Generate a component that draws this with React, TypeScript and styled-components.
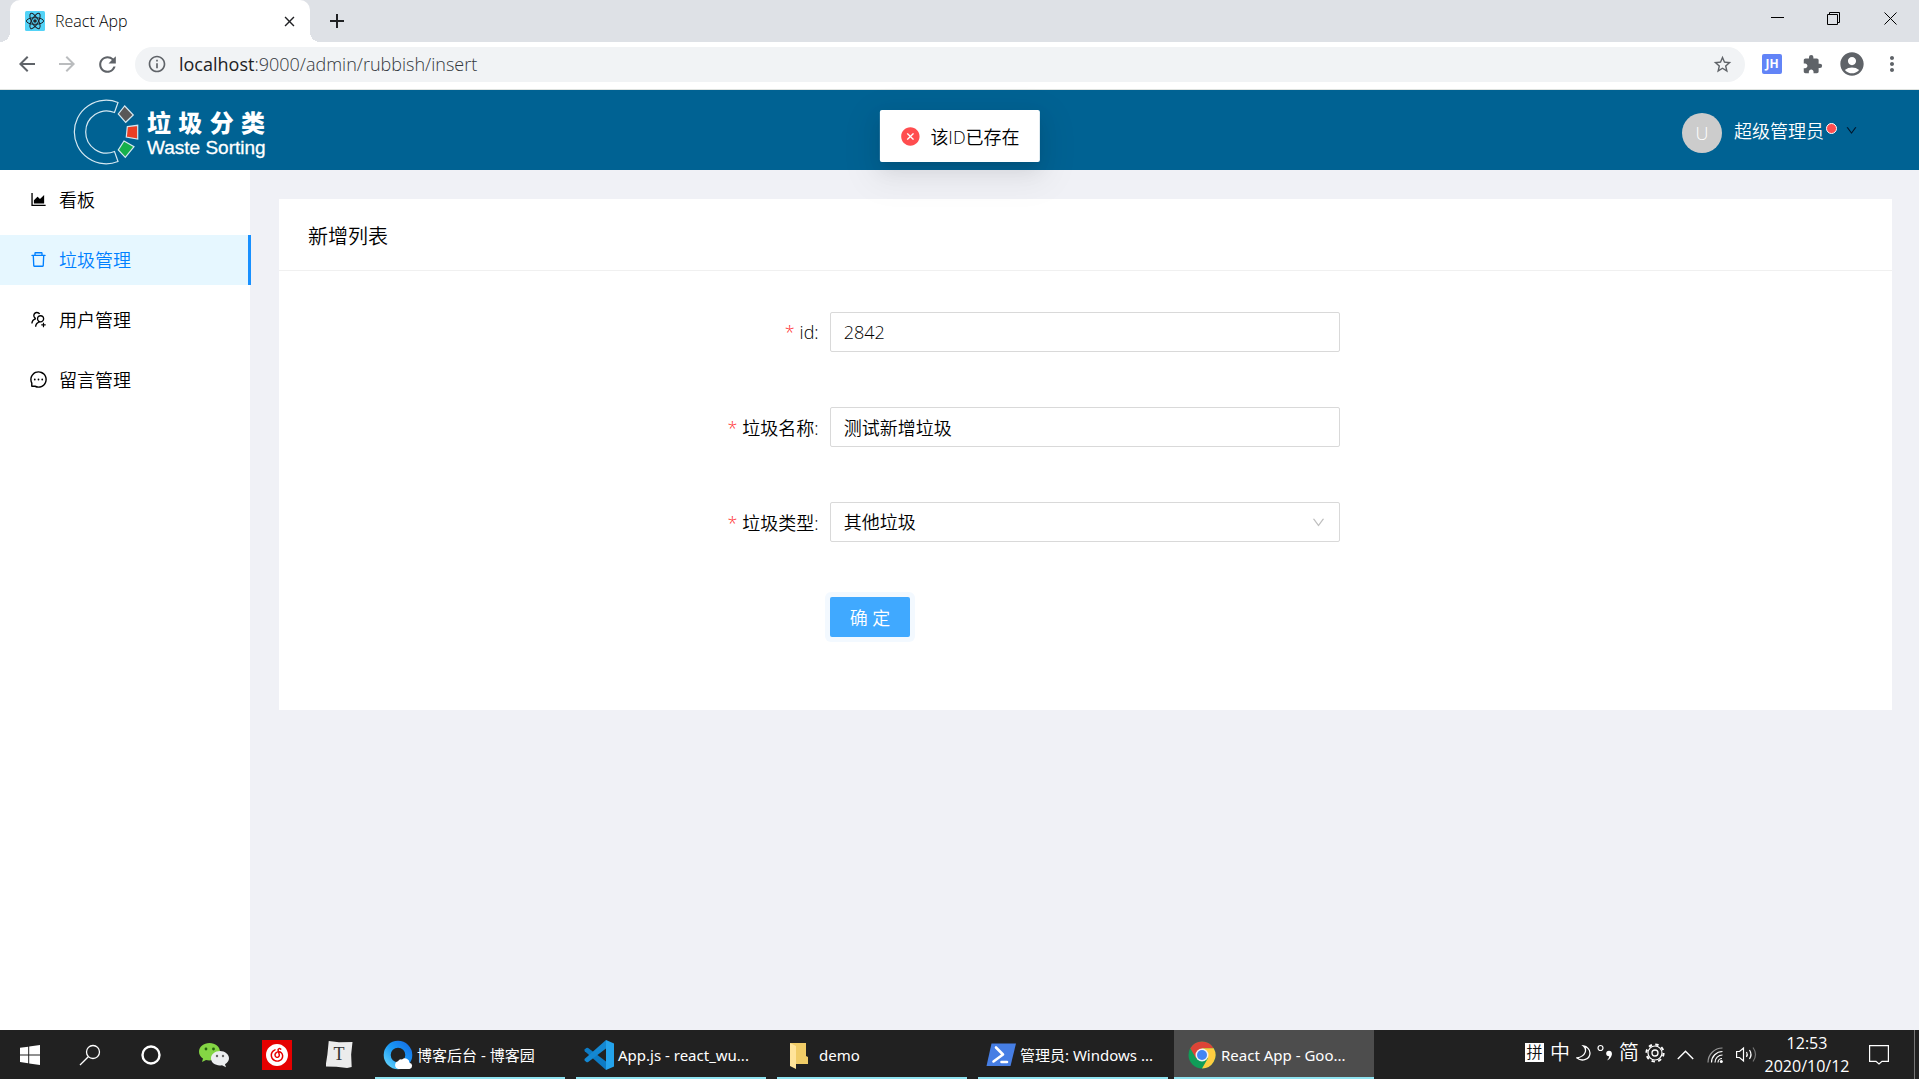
import React from 'react';
import styled, { createGlobalStyle, css } from 'styled-components';
import {
  AiOutlineAreaChart,
  AiOutlineDelete,
  AiOutlineUsergroupAdd,
  AiOutlineMessage,
  AiFillCloseCircle,
  AiOutlineDown,
} from 'react-icons/ai';
import {
  MdExtension,
  MdAccountCircle,
  MdMoreVert,
  MdStarBorder,
  MdInfoOutline,
  MdArrowBack,
  MdArrowForward,
  MdRefresh,
  MdClose,
  MdAdd,
} from 'react-icons/md';
import { SiNeteasecloudmusic } from 'react-icons/si';

const thin = '"Open Sans", "Noto Sans CJK SC", sans-serif';
const ui = '"Noto Sans", "Noto Sans CJK SC", sans-serif';

const GlobalStyle = createGlobalStyle`
  *, *::before, *::after { box-sizing: border-box; }
  body { margin: 0; font-family: ${ui}; background: #f0f1f6; }
  button { font: inherit; color: inherit; background: none; border: 0; padding: 0; cursor: pointer; }
  svg { display: block; flex: none; }
`;

const Desktop = styled.div`
  min-height: 100vh;
  display: flex;
  flex-direction: column;
`;

/* Browser window */
const TabStrip = styled.div`
  height: 42px;
  display: flex;
  background: #dee1e6;
  padding-left: 10px;
`;

const Tab = styled.div`
  position: relative;
  width: 300px;
  display: flex;
  align-items: center;
  padding: 0 12px 0 15px;
  gap: 10px;
  background: #fff;
  border-radius: 10px 10px 0 0;
  font-family: ${thin};
  font-size: 16px;
  font-weight: 300;
  color: #000;

  &::before,
  &::after {
    content: '';
    position: absolute;
    bottom: 0;
    width: 10px;
    height: 10px;
  }
  &::before {
    left: -10px;
    background: radial-gradient(circle at 0 0, transparent 10px, #fff 10px);
  }
  &::after {
    right: -10px;
    background: radial-gradient(circle at 100% 0, transparent 10px, #fff 10px);
  }
`;

const TabTitle = styled.span`
  flex: 1;
`;

const IconButton = styled.button<{ $w?: number; $color?: string }>`
  width: ${(p) => p.$w ?? 40}px;
  display: flex;
  align-items: center;
  justify-content: center;
  color: ${(p) => p.$color ?? '#5f6368'};
`;

const WindowControls = styled.div`
  margin-left: auto;
  height: 36px;
  display: flex;
`;

const Toolbar = styled.div`
  height: 48px;
  display: flex;
  align-items: center;
  padding: 0 7px 3px 7px;
  background: #fff;
  border-bottom: 1px solid #dfe3e0;
`;

const AddressBar = styled.form`
  flex: 1;
  height: 35px;
  margin: 0 7px 0 8px;
  display: flex;
  align-items: center;
  gap: 12px;
  padding: 0 12px;
  border-radius: 18px;
  background: #f1f3f5;
  color: #5f6368;
`;

const Url = styled.span`
  flex: 1;
  font-family: ${thin};
  font-size: 18px;
  font-weight: 300;
  color: #33373c;

  b {
    font-weight: 400;
    color: #202124;
  }
`;

/* Application */
const Page = styled.div`
  flex: 1;
  display: flex;
  flex-direction: column;
  font-family: ${thin};
  font-size: 18px;
  font-weight: 350;
  color: #000;
`;

const Header = styled.header`
  position: relative;
  height: 80px;
  display: flex;
  align-items: center;
  justify-content: space-between;
  padding: 0 61px 0 73px;
  background: #006293;
`;

const Brand = styled.a`
  display: flex;
  align-items: center;
  gap: 8px;
  padding-top: 4px;
  color: #fff;
  text-decoration: none;
`;

const BrandText = styled.span`
  display: flex;
  flex-direction: column;
  padding-top: 4px;
`;

const BrandName = styled.span`
  display: flex;
  justify-content: space-between;
  width: 118px;
  font-size: 24px;
  line-height: 28px;
  font-weight: 900;
`;

const BrandSub = styled.span`
  font-family: "Liberation Sans", Arial, sans-serif;
  font-size: 19px;
  line-height: 22px;
  font-weight: 400;
  -webkit-text-stroke: 0.3px #fff;
`;

const UserMenu = styled.button`
  display: flex;
  align-items: center;
  color: #fff;
`;

const Avatar = styled.span`
  width: 40px;
  height: 40px;
  margin: 6px 12px 0 0;
  border-radius: 50%;
  background: #ccc;
  font-size: 18px;
  line-height: 40px;
  text-align: center;
`;

const Dot = styled.i`
  width: 11px;
  height: 11px;
  margin: 0 8px 4px 2px;
  border: 1px solid #fff;
  border-radius: 50%;
  background: #ff4d4f;
`;

const Toast = styled.div`
  position: absolute;
  top: 20px;
  left: 50%;
  transform: translateX(-50%);
  z-index: 2;
  height: 52px;
  display: flex;
  align-items: center;
  gap: 10px;
  padding: 0 20px;
  border-radius: 2px;
  background: #fff;
  white-space: nowrap;
  box-shadow: 0 4px 8px -5px rgba(0, 0, 0, 0.12), 0 8px 20px rgba(0, 0, 0, 0.08),
    0 11px 35px 10px rgba(0, 0, 0, 0.05);

  svg {
    color: #ff4d4f;
  }
`;

const Body = styled.div`
  flex: 1;
  display: flex;
`;

const Sidebar = styled.nav`
  width: 250px;
  padding-top: 5px;
  background: #fff;
  display: flex;
  flex-direction: column;
  gap: 10px;
`;

const MenuItem = styled.a<{ $active?: boolean }>`
  height: 50px;
  display: flex;
  align-items: center;
  gap: 11px;
  padding: 0 0 2px 29px;
  color: inherit;
  text-decoration: none;
  ${(p) =>
    p.$active &&
    css`
      margin-right: -1px;
      color: #0080ff;
      background: #e6f7ff;
      border-right: 3px solid #1890ff;
    `}
`;

const Main = styled.main`
  flex: 1;
  padding: 29px 27px 29px 29px;
`;

const Card = styled.section`
  background: #fff;
`;

const CardTitle = styled.h1`
  margin: 0;
  height: 72px;
  padding: 0 29px;
  border-bottom: 1px solid #f0f0f0;
  font-size: 20px;
  line-height: 75px;
  font-weight: 350;
`;

const Form = styled.form`
  display: flex;
  flex-direction: column;
  gap: 55px;
  padding: 41px 41px 73px 40px;
`;

const FormRow = styled.div`
  display: grid;
  grid-template-columns: repeat(3, 1fr);
  align-items: center;
  min-height: 40px;
`;

const Label = styled.label`
  padding-right: 11px;
  text-align: right;

  &::before {
    content: '*';
    margin-right: 5px;
    color: #ff3033;
  }
`;

const control = css`
  width: 100%;
  height: 40px;
  padding: 0 13px;
  border: 1px solid #d9d9d9;
  border-radius: 2px;
  background: #fff;
  font: inherit;
  color: inherit;
  outline: none;
`;

const Input = styled.input`
  ${control}
`;

const SelectBox = styled.div`
  position: relative;
  color: inherit;

  svg {
    position: absolute;
    right: 14px;
    top: 13px;
    color: #bfbfbf;
    pointer-events: none;
  }
`;

const Select = styled.select`
  ${control}
  appearance: none;
`;

const Submit = styled.button`
  grid-column: 2;
  justify-self: start;
  height: 40px;
  padding: 0 20px;
  border-radius: 2px;
  background: #40a9ff;
  color: #fff;
  box-shadow: 0 0 0 5px #f3f9ff, 0 2px 0 rgba(0, 0, 0, 0.05);
`;

/* Taskbar */
const Taskbar = styled.footer`
  height: 49px;
  display: flex;
  align-items: stretch;
  background: #212121;
  color: #fff;
  font-size: 15px;
`;

const Pinned = styled.div`
  display: flex;
`;

const Tasks = styled.div`
  display: flex;
  gap: 1px;
`;

const Task = styled.button<{ $active?: boolean }>`
  width: 200px;
  display: flex;
  align-items: center;
  gap: 4px;
  padding: 0 13px;
  white-space: nowrap;
  text-align: left;
  background: linear-gradient(#8fe3f0, #8fe3f0) bottom center no-repeat;
  background-size: ${(p) => (p.$active ? '100% 2px' : '190px 2px')};
  background-color: ${(p) => (p.$active ? '#4d4d4d' : 'transparent')};
`;

const Tray = styled.div`
  margin-left: auto;
  display: flex;
  align-items: center;
`;

const Ime = styled.div`
  display: flex;
  align-items: center;
  gap: 6px;
  padding: 0 12px 4px 0;
  font-size: 20px;
  line-height: 20px;
  font-weight: 350;
`;

const ImeMode = styled.span`
  width: 19px;
  height: 19px;
  background: #fff;
  color: #111;
  font-size: 16px;
  line-height: 18px;
  text-align: center;
`;

const Clock = styled.div`
  width: 86px;
  margin: 0 19px 0 7px;
  font-family: ${thin};
  font-size: 16px;
  text-align: center;
  line-height: 23px;
`;

const ShowDesktop = styled.button`
  align-self: stretch;
  width: 5px;
  margin-left: 25px;
  border-left: 1px solid #777;
`;

const ReactLogo = () => (
  <svg width="20" height="20" viewBox="0 0 20 20" fill="none" stroke="#20232a" strokeWidth="1">
    <rect width="20" height="20" rx="1.5" fill="#53d3f7" stroke="none" />
    <circle cx="10" cy="10" r="1.8" fill="#20232a" stroke="none" />
    <ellipse cx="10" cy="10" rx="8.6" ry="3.3" />
    <ellipse cx="10" cy="10" rx="8.6" ry="3.3" transform="rotate(60 10 10)" />
    <ellipse cx="10" cy="10" rx="8.6" ry="3.3" transform="rotate(120 10 10)" />
  </svg>
);

const BrandLogo = () => (
  <svg width="66" height="66" viewBox="0 0 66 66" fill="none" stroke="#d5e8f1" strokeWidth="1.2">
    <path d="M45 3.500A31.800 31.800 0 1 0 45 62.500L41.500 52.500A21 21 0 1 1 41.500 13.500Z" />
    <path d="M51.700 7L60.300 16L52.700 23.300L45.300 15Z" fill="#595757" />
    <path d="M54.300 27.700L64.700 26.300V40L53.300 38Z" fill="#ea3e24" />
    <path d="M51 42L61 47.700L52.300 58.300L45.300 51Z" fill="#16b04b" />
  </svg>
);

const WindowsLogo = () => (
  <svg width="20" height="20" viewBox="0 0 20 20" fill="#fff">
    <path d="M0 2.800L8.200 1.700V9.400H0zM9.200 1.500L20 0V9.400H9.200zM0 10.400H8.200V18.200L0 17.100zM9.200 10.400H20V20L9.200 18.400z" />
  </svg>
);

const SearchIcon = () => (
  <svg width="22" height="22" viewBox="0 0 22 22" fill="none" stroke="#fff" strokeWidth="1.300">
    <circle cx="14" cy="8" r="6.500" />
    <path d="M9.300 12.700L1 21" />
  </svg>
);

const CortanaIcon = () => (
  <svg width="20" height="20" viewBox="0 0 20 20" fill="none">
    <circle cx="10" cy="10" r="8.500" stroke="#fff" strokeWidth="2.400" />
  </svg>
);

const WechatIcon = () => (
  <svg width="30" height="26" viewBox="0 0 30 26">
    <path d="M10.500 1C4.700 1 0 4.800 0 9.700c0 2.800 1.500 5.200 4 6.800L3 20l4-2c6 1.500 14-1.500 14-8.300C21 4.800 16.300 1 10.500 1Z" fill="#84d644" />
    <circle cx="7" cy="7" r="1.400" fill="#26610f" />
    <circle cx="14.500" cy="7" r="1.400" fill="#26610f" />
    <path d="M21 9c-5 0-9 3.300-9 7.300 0 5 5.500 8 11 6.900l4 2-1-3c2.500-1.400 4-3.500 4-5.900C30 12.300 26 9 21 9Z" fill="#eceef0" />
    <circle cx="18" cy="14" r="1.200" fill="#666" />
    <circle cx="24" cy="14" r="1.200" fill="#666" />
  </svg>
);

const NeteaseTile = styled.span`
  width: 30px;
  height: 30px;
  display: grid;
  place-items: center;
  background: #e60000;
`;

const TyporaTile = styled.span`
  width: 27px;
  height: 27px;
  background: #ececec;
  clip-path: polygon(12% 0, 50% 5%, 100% 4%, 95% 50%, 97% 96%, 80% 100%, 40% 95%, 0 94%, 7% 50%);
  color: #333;
  font: 18px/27px "Liberation Serif", serif;
`;

const QQBrowserIcon = () => (
  <svg width="30" height="30" viewBox="0 0 30 30">
    <defs>
      <linearGradient id="qb" x1="0" y1="1" x2="1" y2="0">
        <stop offset="0" stopColor="#5fd0fb" />
        <stop offset=".5" stopColor="#1a9af5" />
        <stop offset="1" stopColor="#1572e8" />
      </linearGradient>
    </defs>
    <circle cx="15" cy="15" r="10.800" fill="none" stroke="url(#qb)" strokeWidth="7" />
    <path d="M15.500 29a4 4 0 0 1-.5-7.800 3.500 3.500 0 0 1 4-1.700 4.500 4.500 0 0 1 7.500 3.200A3.200 3.200 0 0 1 26.500 29Z" fill="#fff" />
  </svg>
);

const VsCodeIcon = () => (
  <svg width="30" height="30" viewBox="0 0 30 30">
    <path d="M22 0L30 3.500V26.500L22 30Z" fill="#24a3ec" />
    <path d="M22 30L0.800 11.200Q0 10.200 .8 9.300L2.300 8Q3.200 7.300 4.200 8L22 21.500Z" fill="#0d7bc4" />
    <path d="M22 0L.8 18.800Q0 19.800 .8 20.700L2.300 22Q3.200 22.700 4.200 22L22 8.500Z" fill="#1488d2" />
  </svg>
);

const FolderIcon = () => (
  <svg width="30" height="30" viewBox="0 0 30 30">
    <path d="M5 3H21V16L23 17V24H9Z" fill="#f0cc67" />
    <path d="M5 3L11 6V29L5 26Z" fill="#ffe49a" />
  </svg>
);

const PowerShellIcon = () => (
  <svg width="30" height="30" viewBox="0 0 30 30">
    <path d="M5.500 3.500H30L24.500 26H0.500Z" fill="#467ee4" />
    <path d="M10 7.500L17 14.500L7.500 21.500M15.500 22H21" fill="none" stroke="#fff" strokeWidth="2.600" strokeLinecap="round" strokeLinejoin="round" />
  </svg>
);

const ChromeIcon = () => (
  <svg width="30" height="30" viewBox="0 0 30 30">
    <circle cx="15" cy="15" r="13.500" fill="#109d58" />
    <path d="M15 15L3.300 8.250A13.500 13.500 0 0 1 26.700 8.250H15Z" fill="#dc4437" />
    <path d="M3.300 8.250L9.200 18.400L15 8.250Z" fill="#dc4437" />
    <path d="M26.700 8.250A13.500 13.500 0 0 1 15 28.500L20.800 18.400L15 8.250Z" fill="#ffcd40" />
    <circle cx="15" cy="15" r="6.500" fill="#f1f1f1" />
    <circle cx="15" cy="15" r="5" fill="#4285f4" />
  </svg>
);

const ExtensionBadge = styled.span`
  width: 20px;
  height: 20px;
  border-radius: 2px;
  background: #6284f7;
  color: #fff;
  font-size: 12px;
  line-height: 20px;
  font-weight: 700;
  text-align: center;
`;

const MoonIcon = () => (
  <svg width="15" height="16" viewBox="0 0 15 16" fill="none" stroke="#fff" strokeWidth="1.300">
    <path d="M7.500 1C11 4 10.500 11 1 13c5 4 13 1.500 13-5 0-3.500-3-6.500-6.500-7Z" />
  </svg>
);

const PunctuationIcon = () => (
  <svg width="16" height="18" viewBox="0 0 16 18">
    <circle cx="3.500" cy="4" r="2.500" fill="none" stroke="#fff" strokeWidth="1.200" />
    <circle cx="12" cy="9.500" r="2.800" fill="#fff" />
    <path d="M14.700 9.500Q15 14 10 16.500Q13 13 12 10Z" fill="#fff" />
  </svg>
);

const GearIcon = () => (
  <svg width="20" height="20" viewBox="0 0 20 20" fill="none" stroke="#fff">
    <circle cx="10" cy="10" r="7" strokeWidth="1.200" />
    <circle cx="10" cy="10" r="8.600" strokeWidth="2" strokeDasharray="3.400 3.354" />
    <circle cx="10" cy="10" r="3" strokeWidth="1.300" />
  </svg>
);

const TrayIcons = styled.div`
  display: flex;
  align-items: center;
  gap: 13px;
`;

const menu = [
  { label: '看板', icon: AiOutlineAreaChart },
  { label: '垃圾管理', icon: AiOutlineDelete, active: true },
  { label: '用户管理', icon: AiOutlineUsergroupAdd },
  { label: '留言管理', icon: AiOutlineMessage },
];

const tasks = [
  { label: '博客后台 - 博客园', icon: QQBrowserIcon },
  { label: 'App.js - react_wu...', icon: VsCodeIcon },
  { label: 'demo', icon: FolderIcon },
  { label: '管理员: Windows ...', icon: PowerShellIcon },
  { label: 'React App - Goo...', icon: ChromeIcon, active: true },
];

function BrowserChrome() {
  return (
    <>
      <TabStrip>
        <Tab>
          <ReactLogo />
          <TabTitle>React App</TabTitle>
          <IconButton $w={17} $color="#202124" aria-label="Close tab">
            <MdClose size={17} />
          </IconButton>
        </Tab>
        <IconButton $w={54} $color="#202124" aria-label="New tab">
          <MdAdd size={24} />
        </IconButton>
        <WindowControls>
          <IconButton $w={56} aria-label="Minimize">
            <svg width="13" height="13" stroke="#000"><path d="M0 5.500H13" /></svg>
          </IconButton>
          <IconButton $w={56} aria-label="Restore">
            <svg width="13" height="13" fill="none" stroke="#000">
              <path d="M.5 2.500H10.500V12.500H.5zM2.500 2.500V.5H12.500V10.500H10.500" />
            </svg>
          </IconButton>
          <IconButton $w={58} aria-label="Close">
            <svg width="13" height="13" stroke="#000"><path d="M.5 .5L12.500 12.500M12.500 .5L.5 12.500" /></svg>
          </IconButton>
        </WindowControls>
      </TabStrip>
      <Toolbar>
        <IconButton aria-label="Back"><MdArrowBack size={24} /></IconButton>
        <IconButton $color="#babcbe" aria-label="Forward"><MdArrowForward size={24} /></IconButton>
        <IconButton aria-label="Reload"><MdRefresh size={25} /></IconButton>
        <AddressBar>
          <MdInfoOutline size={20} />
          <Url><b>localhost</b>:9000/admin/rubbish/insert</Url>
          <MdStarBorder size={21} />
        </AddressBar>
        <IconButton aria-label="JH"><ExtensionBadge>JH</ExtensionBadge></IconButton>
        <IconButton aria-label="Extensions"><MdExtension size={21} /></IconButton>
        <IconButton aria-label="Profile"><MdAccountCircle size={28} /></IconButton>
        <IconButton aria-label="Menu"><MdMoreVert size={24} /></IconButton>
      </Toolbar>
    </>
  );
}

export default function App() {
  return (
    <Desktop>
      <GlobalStyle />
      <BrowserChrome />
      <Page>
        <Header>
          <Brand href="#">
            <BrandLogo />
            <BrandText>
              <BrandName>{[...'垃圾分类'].map((c) => <span key={c}>{c}</span>)}</BrandName>
              <BrandSub>Waste Sorting</BrandSub>
            </BrandText>
          </Brand>
          <UserMenu>
            <Avatar>U</Avatar>
            超级管理员
            <Dot />
            <AiOutlineDown size={13} color="#001529" />
          </UserMenu>
          <Toast role="alert">
            <AiFillCloseCircle size={21} />
            该ID已存在
          </Toast>
        </Header>
        <Body>
          <Sidebar>
            {menu.map(({ label, icon: Icon, active }) => (
              <MenuItem key={label} href="#" $active={active}>
                <Icon size={19} />
                {label}
              </MenuItem>
            ))}
          </Sidebar>
          <Main>
            <Card>
              <CardTitle>新增列表</CardTitle>
              <Form>
                <FormRow>
                  <Label htmlFor="id">id:</Label>
                  <Input id="id" defaultValue="2842" />
                </FormRow>
                <FormRow>
                  <Label htmlFor="name">垃圾名称:</Label>
                  <Input id="name" defaultValue="测试新增垃圾" />
                </FormRow>
                <FormRow>
                  <Label htmlFor="type">垃圾类型:</Label>
                  <SelectBox>
                    <Select id="type" defaultValue="other">
                      <option value="other">其他垃圾</option>
                    </Select>
                    <AiOutlineDown size={15} />
                  </SelectBox>
                </FormRow>
                <FormRow>
                  <Submit type="button">确 定</Submit>
                </FormRow>
              </Form>
            </Card>
          </Main>
        </Body>
      </Page>
      <Taskbar>
        <Pinned>
          <IconButton $w={60} aria-label="Start"><WindowsLogo /></IconButton>
          <IconButton $w={60} aria-label="Search"><SearchIcon /></IconButton>
          <IconButton $w={62} aria-label="Cortana"><CortanaIcon /></IconButton>
          <IconButton $w={64} aria-label="WeChat"><WechatIcon /></IconButton>
          <IconButton $w={62} aria-label="Music">
            <NeteaseTile><SiNeteasecloudmusic size={22} color="#fff" /></NeteaseTile>
          </IconButton>
          <IconButton $w={62} aria-label="Typora"><TyporaTile>T</TyporaTile></IconButton>
        </Pinned>
        <Tasks>
          {tasks.map(({ label, icon: Icon, active }) => (
            <Task key={label} $active={active}>
              <Icon />
              {label}
            </Task>
          ))}
        </Tasks>
        <Tray>
          <Ime>
            <ImeMode>拼</ImeMode>
            <span>中</span>
            <MoonIcon />
            <PunctuationIcon />
            <span>简</span>
            <GearIcon />
          </Ime>
          <TrayIcons>
            <svg width="17" height="10" fill="none" stroke="#fff" strokeWidth="1.400"><path d="M.8 9L8.500 1.200L16.200 9" /></svg>
            <svg width="16" height="16" viewBox="0 0 16 16" fill="none" stroke="#fff" strokeWidth="1.200">
              <path d="M11 15.500A4 4 0 0 1 15 11.500M8 15.500A7.500 7.500 0 0 1 15.500 8M4.500 15.500A11 11 0 0 1 15.500 4.500" />
              <path d="M1 15.500A14.500 14.500 0 0 1 15.500 1" stroke="#999" />
              <circle cx="14.300" cy="14.500" r="1.500" fill="#fff" stroke="none" />
            </svg>
            <svg width="21" height="17" viewBox="0 0 21 17" fill="none" stroke="#fff" strokeWidth="1.200">
              <path d="M.6 5.500H3.500L7.500 2V15L3.500 11.500H.6ZM10.500 6Q12 8.500 10.500 11M13.500 4Q16.500 8.500 13.500 13" />
              <path d="M17 1.500Q22 8.500 17 15.500" stroke="#777" />
            </svg>
          </TrayIcons>
          <Clock>
            12:53
            <br />
            2020/10/12
          </Clock>
          <svg width="20" height="20" fill="none" stroke="#fff" strokeWidth="1.200">
            <path d="M.6 .6H19.400V16.400H13L10 19L7 16.400H.6Z" />
          </svg>
          <ShowDesktop aria-label="Show desktop" />
        </Tray>
      </Taskbar>
    </Desktop>
  );
}
